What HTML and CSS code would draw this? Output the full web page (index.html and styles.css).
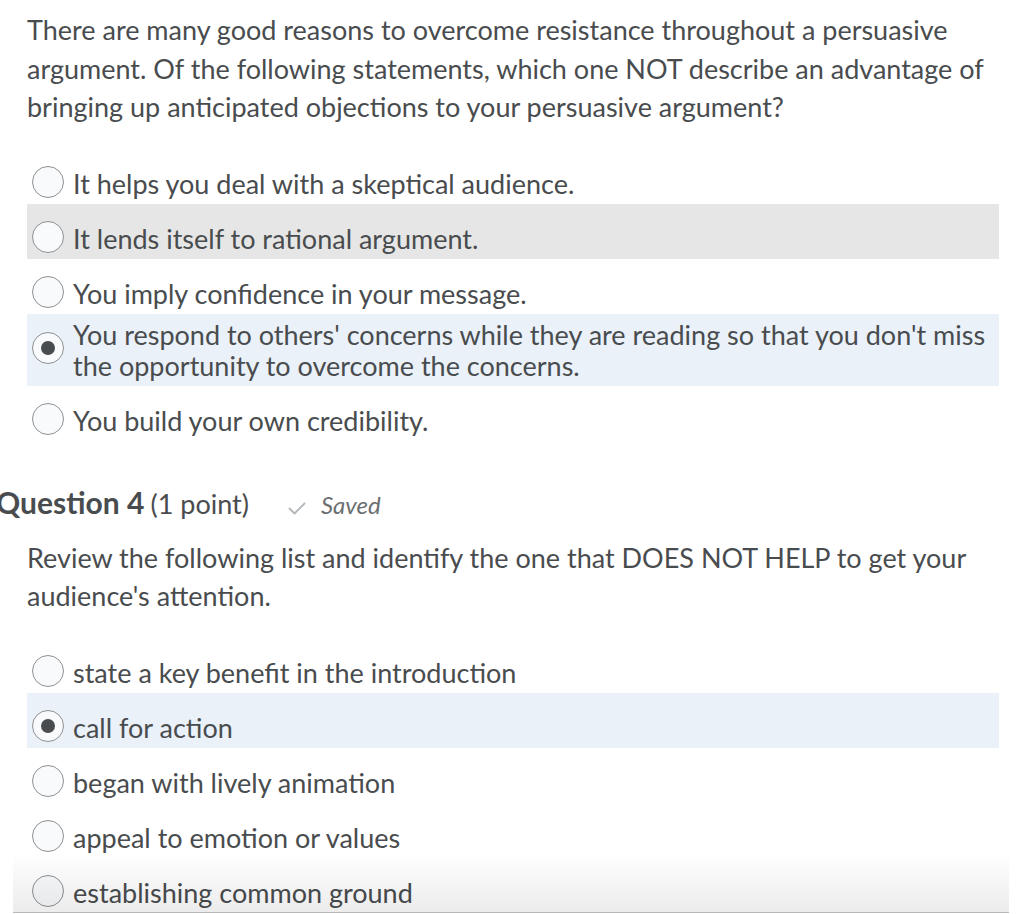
FILE: index.html
```html
<!DOCTYPE html>
<html lang="en">
<head>
<meta charset="utf-8">
<title>Quiz</title>
<link rel="stylesheet" href="styles.css">
</head>
<body>
<main class="page">
  <section class="question">
    <p class="prompt">There are many good reasons to overcome resistance throughout a persuasive argument. Of the following statements, which one NOT describe an advantage of bringing up anticipated objections to your persuasive argument?</p>
    <div class="options">
      <label class="opt"><span class="radio"></span><span class="opt-text">It helps you deal with a skeptical audience.</span></label>
      <label class="opt opt-hover"><span class="radio"></span><span class="opt-text">It lends itself to rational argument.</span></label>
      <label class="opt"><span class="radio"></span><span class="opt-text">You imply confidence in your message.</span></label>
      <label class="opt opt-selected opt-tall"><span class="radio radio-on"></span><span class="opt-text">You respond to others' concerns while they are reading so that you don't miss the opportunity to overcome the concerns.</span></label>
      <label class="opt"><span class="radio"></span><span class="opt-text">You build your own credibility.</span></label>
    </div>
  </section>

  <section class="question">
    <h2 class="q-head"><strong class="q-title">Question 4</strong> <span class="q-points">(1 point)</span><span class="saved"><svg class="check" viewBox="0 0 18 13" width="18" height="13"><path d="M1.5 6.5 L6.5 11.5 L16.5 1.5" fill="none" stroke="#b3b7ba" stroke-width="1.8" stroke-linecap="round" stroke-linejoin="round"/></svg><em>Saved</em></span></h2>
    <p class="prompt">Review the following list and identify the one that DOES NOT HELP to get your audience's attention.</p>
    <div class="options">
      <label class="opt"><span class="radio"></span><span class="opt-text">state a key benefit in the introduction</span></label>
      <label class="opt opt-selected"><span class="radio radio-on"></span><span class="opt-text">call for action</span></label>
      <label class="opt"><span class="radio"></span><span class="opt-text">began with lively animation</span></label>
      <label class="opt"><span class="radio"></span><span class="opt-text">appeal to emotion or values</span></label>
      <label class="opt"><span class="radio"></span><span class="opt-text">establishing common ground</span></label>
    </div>
  </section>
</main>
<div class="bottom-fade"></div>
</body>
</html>
```

FILE: styles.css
```css
html, body {
  margin: 0;
  padding: 0;
  background: #ffffff;
  overflow: hidden;
}

body {
  font-family: Lato, "Open Sans", sans-serif;
  color: #494c4e;
  height: 914px;
}

.page {
  padding: 11px 25px 0 27px;
}

.prompt {
  margin: 0;
  font-size: 27px;
  line-height: 38.5px;
}

.options {
  margin-top: 22px;
  display: flex;
  flex-direction: column;
}

.opt {
  display: flex;
  align-items: center;
  padding: 16px 0 5px 5px;
  font-size: 27px;
  line-height: 31px;
}

.opt-text {
  padding-top: 3px;
}

.opt-tall {
  padding: 2px 0 5px 5px;
}

.opt-hover {
  background: #e6e6e6;
}

.opt-selected {
  background: #eaf1f9;
}

.radio {
  box-sizing: border-box;
  flex: 0 0 auto;
  width: 32px;
  height: 32px;
  border: 1.5px solid #8e9193;
  border-radius: 50%;
  background: #f9fafc;
  margin-right: 9px;
  display: flex;
  align-items: center;
  justify-content: center;
}

.radio-on::after {
  content: "";
  width: 14px;
  height: 14px;
  border-radius: 50%;
  background: #494c4e;
}

.q-head {
  margin: 43px 0 16px -31px;
  line-height: 36px;
  font-weight: 400;
  white-space: nowrap;
}

.q-title {
  font-size: 30px;
  font-weight: 700;
}

.q-points {
  font-size: 27px;
}

.saved {
  margin-left: 39px;
  color: #6b6f72;
  font-size: 24px;
}

.check {
  margin-right: 15px;
  vertical-align: -1px;
}

.saved em {
  font-style: italic;
}

.bottom-fade {
  position: fixed;
  left: 13px;
  right: 15px;
  top: 852px;
  height: 60px;
  background: linear-gradient(to bottom, rgba(0,0,0,0) 0%, rgba(0,0,0,0.075) 100%);
  border-bottom: 1px solid #b9b9b9;
  pointer-events: none;
}
```
